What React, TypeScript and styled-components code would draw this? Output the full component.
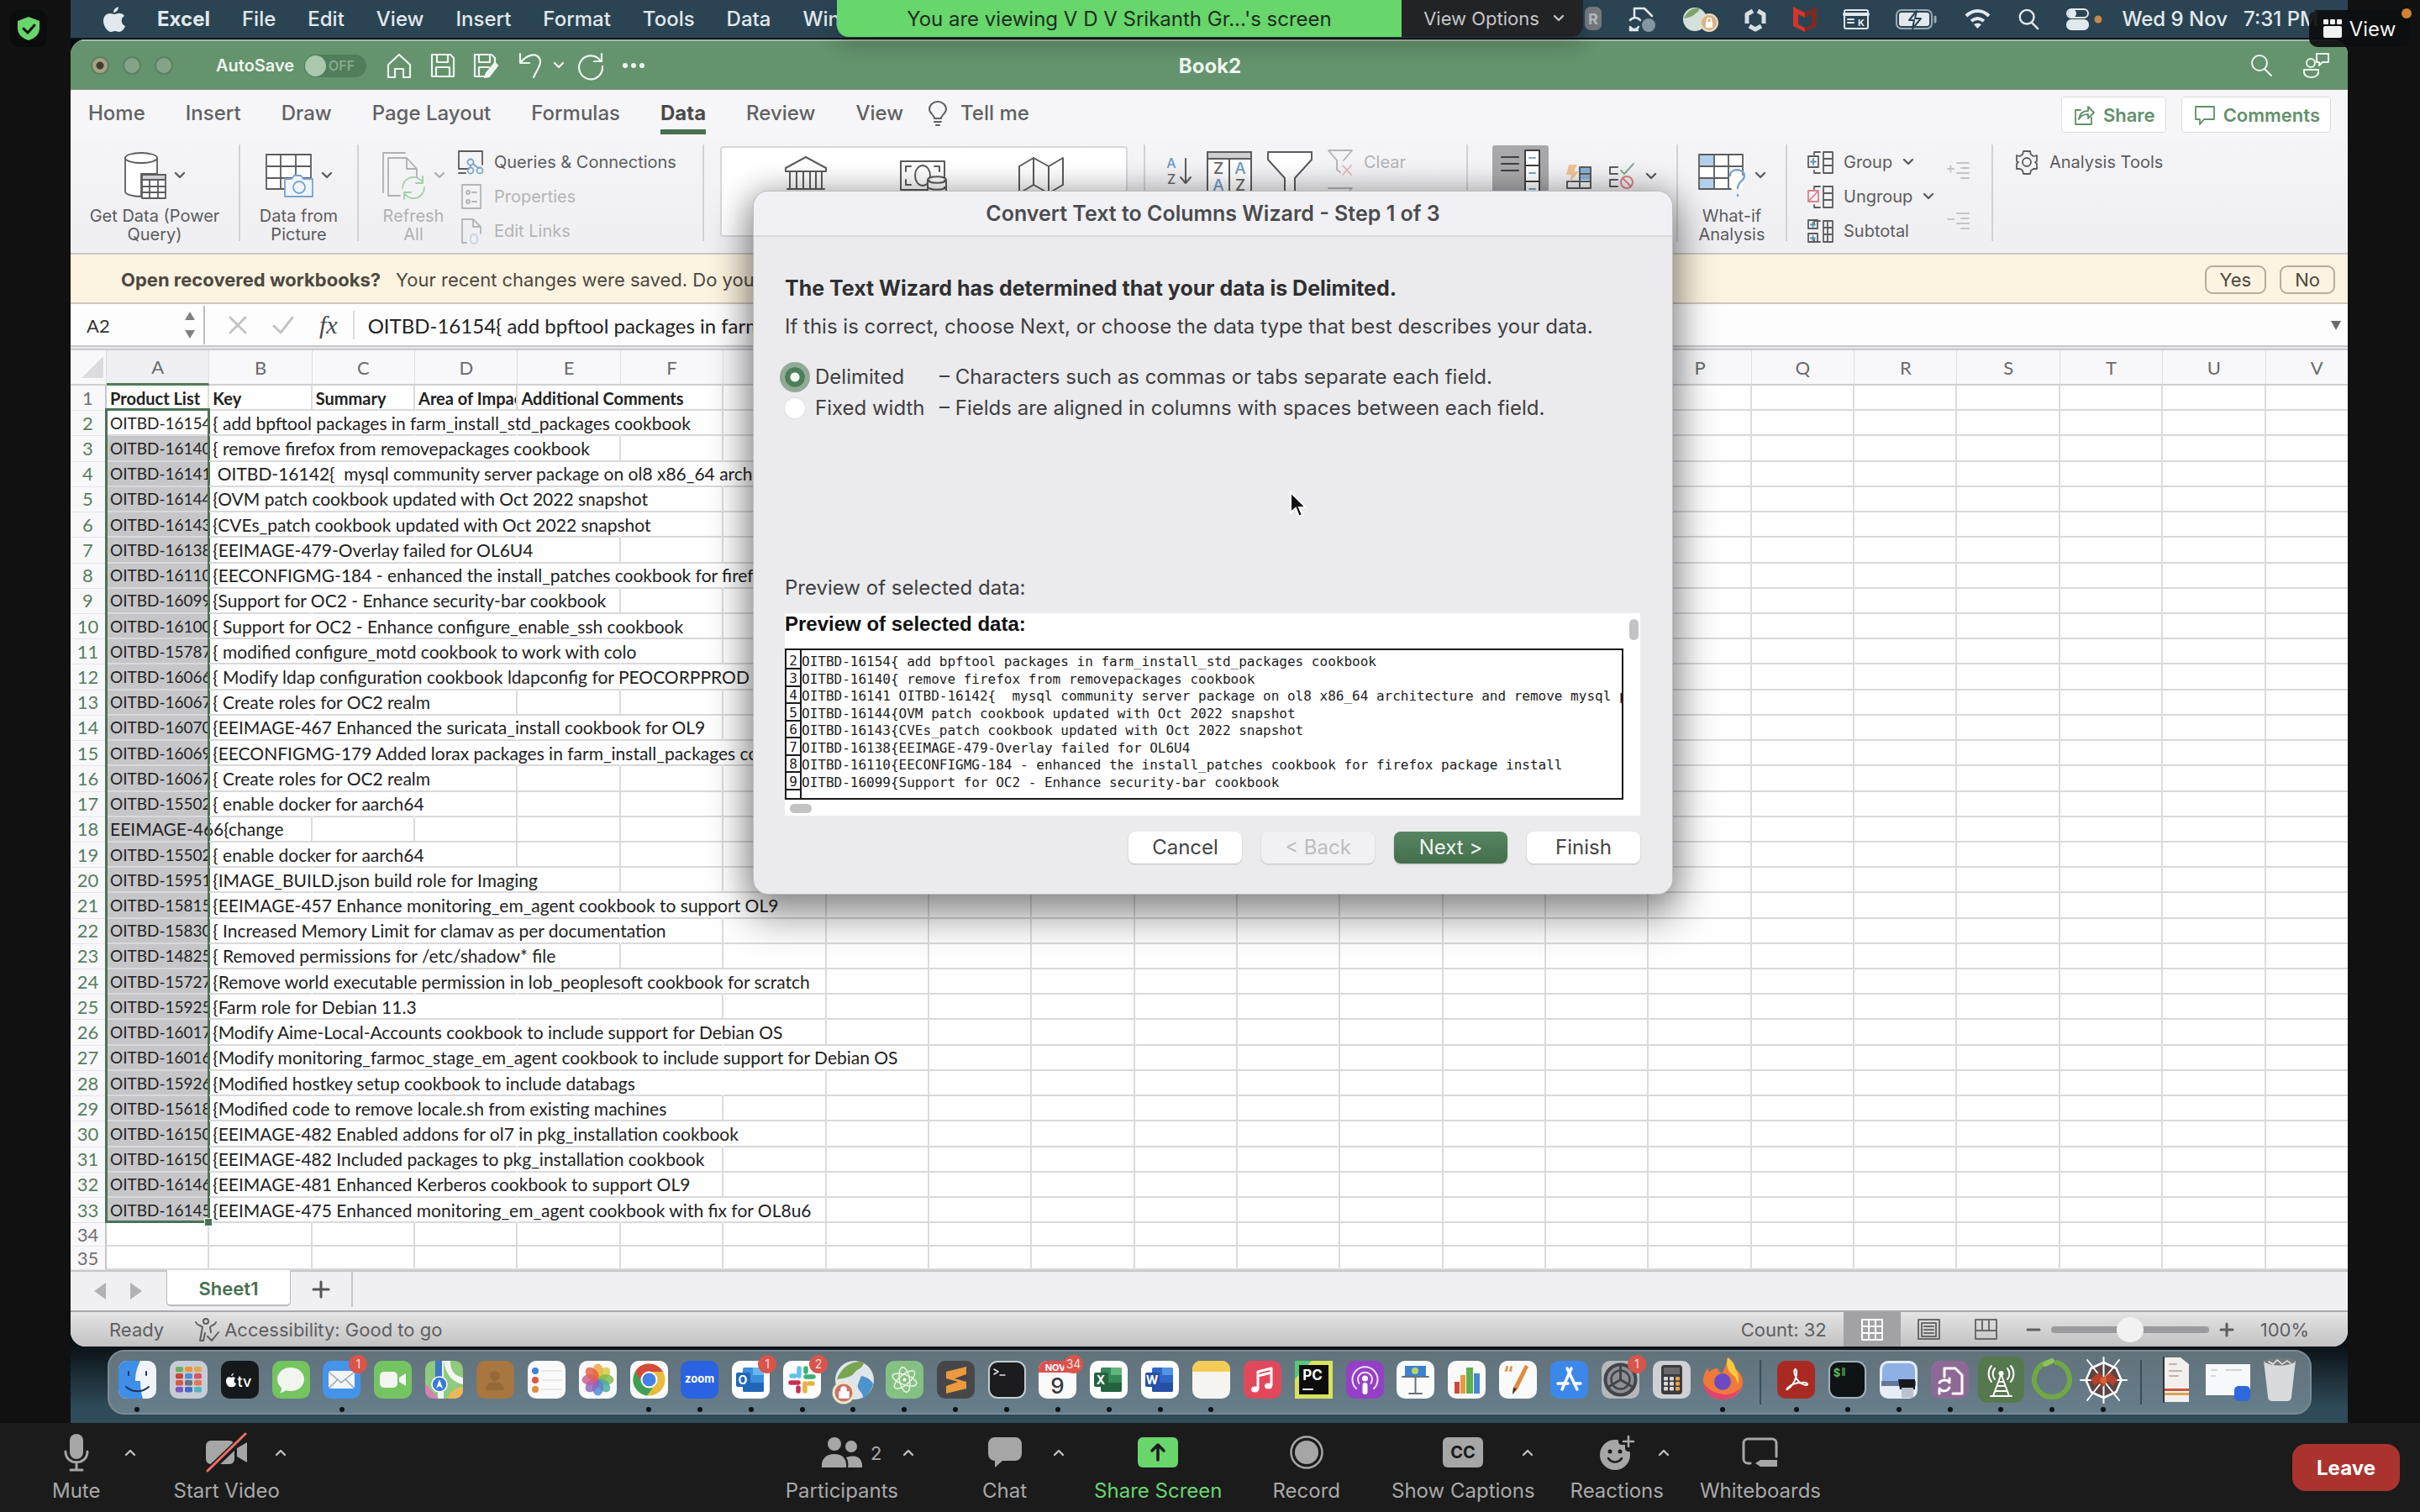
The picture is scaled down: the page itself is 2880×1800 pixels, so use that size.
import React from "react";
import styled, { createGlobalStyle } from "styled-components";

const ui = `Inter, "Liberation Sans", sans-serif`;
const cellFont = `Lato, "Liberation Sans", sans-serif`;
const mono = `"DejaVu Sans Mono", "Liberation Mono", monospace`;

const Global = createGlobalStyle`
  * { box-sizing: border-box; }
  body { margin: 0; background: #111; font-family: ${ui}; color: #444; overflow: hidden; }
  button, input { font: inherit; color: inherit; }
  button { background: none; border: 0; padding: 0; white-space: nowrap; }
  svg { display: block; flex: none; overflow: visible; }
`;

/* ---------- drawing helpers ---------- */
type GProps = { w: number; h: number; vb?: string; sw?: number; color?: string; children: React.ReactNode };
const G = ({ w, h, vb, sw = 2, color = "currentColor", children }: GProps) => (
  <svg width={w} height={h} viewBox={vb ?? `0 0 ${w} ${h}`} fill="none" stroke={color} strokeWidth={sw}
    strokeLinecap="round" strokeLinejoin="round" aria-hidden="true">{children}</svg>
);
const Chev = ({ up, w = 14 }: { up?: boolean; w?: number }) => (
  <G w={w} h={8} vb="0 0 14 8" sw={2.4}><path d={up ? "M2 7l5-5 5 5" : "M2 1l5 5 5-5"} /></G>
);

/* ---------- frame ---------- */
const Page = styled.div`display: flex; flex-direction: column; height: 100vh; position: relative;`;
const Stage = styled.div`
  flex: 1; min-height: 0; margin: 0 86px 0 84px; display: flex; flex-direction: column;
  background: linear-gradient(#050a0d 0 1580px, #0a1216 1603px, #2f4a58 1675px);
`;
const MenuBar = styled.header`
  height: 47px; flex: none; background: #2a4453; border-bottom: 2px solid #0d1418; display: flex;
  align-items: center; justify-content: space-between; padding: 0 35px 0 39px; color: #e2e9ee; font-size: 24px;
`;
const Menus = styled.nav`display: flex; align-items: center; gap: 38px;`;
const MenuItem = styled.button<{ $bold?: boolean }>`font-weight: ${p => (p.$bold ? 700 : 500)};`;
const Status = styled.div`display: flex; align-items: center; gap: 32px;`;
const Clock = styled.span`font-weight: 500; display: flex; gap: 19px; margin-left: -8px;`;

const Excel = styled.main`
  position: relative; flex: 1; min-height: 0; display: flex; flex-direction: column; background: #f4f4f6;
  border-radius: 18px; overflow: hidden;
`;
const TitleBar = styled.div`
  height: 60px; flex: none; background: #64936d; border-top: 2px solid #a0bba5; display: grid; grid-template-columns: 1fr auto 1fr;
  align-items: center; padding: 0 22px 0 24px; color: #eef5ef; box-shadow: inset 0 -1px #7c8f80;
`;
const Row = styled.div<{ $gap?: number; $end?: boolean }>`
  display: flex; align-items: center; gap: ${p => p.$gap ?? 0}px; justify-content: ${p => (p.$end ? "flex-end" : "flex-start")};
`;
const Light = styled.button<{ $dot?: boolean }>`
  width: 22px; height: 22px; border-radius: 50%; border: 2px solid #5c8063;
  background: ${p => (p.$dot ? "radial-gradient(#3c4030 0 4px, #a5a384 5px)" : "#82a589")};
`;
const AutoSave = styled.label`display: flex; align-items: center; gap: 12px; font-size: 20px; font-weight: 600; margin: 0 24px 0 51px;`;
const Toggle = styled.span`
  position: relative; width: 74px; height: 27px; border-radius: 14px; background: #527d5b; font-size: 16px; font-weight: 500; color: #8cb093;
  display: flex; align-items: center; justify-content: flex-end; padding-right: 14px;
  input { position: absolute; inset: 0; margin: 0; opacity: 0; }
  &::before { content: ""; position: absolute; left: 1px; top: 1px; width: 25px; height: 25px; border-radius: 50%; background: #a9c8ad; }
`;
const Tool = styled.button<{ $w: number; $after?: number }>`
  width: ${p => p.$w}px; height: 34px; display: grid; place-items: center; margin-right: ${p => p.$after ?? 22}px;
`;
const BookTitle = styled.h1`margin: 0; font-size: 24px; font-weight: 700;`;

/* ---------- ribbon ---------- */
const TabRow = styled.nav`
  height: 58px; flex: none; display: flex; justify-content: space-between; padding: 8px 20px 0 21px; background: #f6f6f8;
`;
const Tabs = styled.div`display: flex; gap: 48px; align-items: flex-start; padding-top: 6px;`;
const Tab = styled.button<{ $on?: boolean }>`
  display: flex; gap: 16px; align-items: center; font-size: 24px; line-height: 28px; padding-bottom: 5px; color: ${p => (p.$on ? "#4a4a4c" : "#616163")};
  font-weight: ${p => (p.$on ? 700 : 500)}; border-bottom: 6px solid ${p => (p.$on ? "#46704f" : "transparent")};
`;
const TellMe = styled(Tab)`margin-left: -18px;`;
const ChipRow = styled.div`display: flex; gap: 18px; align-self: flex-start;`;
const Chip = styled.button`
  height: 43px; padding: 0 12px 0 15px; display: flex; align-items: center; gap: 10px; background: #fff; border: 1px solid #dcdcde; border-radius: 4px;
  color: #63906c; font-size: 22px; font-weight: 600;
`;
const Ribbon = styled.section`
  height: 138px; flex: none; display: flex; padding: 7px 0 14px; background: linear-gradient(#f5f5f7, #efeff1); border-bottom: 2px solid #c9c9cb; font-size: 20px; color: #5c5c5e;
`;
const Group = styled.div<{ $w: number }>`
  flex: 0 0 ${p => p.$w}px; display: flex; border-right: 2px solid #d2d2d4; min-width: 0;
`;
const LastGroup = styled.div`flex: 1; display: flex; align-items: flex-start; padding-left: 27px;`;
const Big = styled.button<{ $w: number; $off?: boolean; $pad?: number }>`
  flex: none; width: ${p => p.$w}px; display: flex; flex-direction: column; align-items: center; padding: 8px 0 0 ${p => p.$pad ?? 0}px; gap: 8px; line-height: 22px;
  color: ${p => (p.$off ? "#b0b0b2" : "#5c5c5e")}; white-space: pre-line; height: 120px;
`;
const BigIcon = styled.span`display: flex; align-items: center; gap: 9px; height: 58px; flex: none;`;
const Stack = styled.div<{ $pad?: number }>`display: flex; flex-direction: column; padding-left: ${p => p.$pad ?? 0}px;`;
const Small = styled.button<{ $off?: boolean; $gap?: number }>`
  height: 41px; flex: none; display: flex; align-items: center; gap: ${p => p.$gap ?? 12}px; color: ${p => (p.$off ? "#b4b4b6" : "#5c5c5e")};
`;
const Gallery = styled.div`
  width: 485px; height: 108px; margin: 2px 0 0 19px; background: #fff; border: 2px solid #d8d8da; border-radius: 4px;
  display: flex; align-items: flex-start; justify-content: space-between; padding: 10px 74px 0 74px;
`;
const Pressed = styled.button`width: 67px; height: 100px; background: #a9a9ab; display: grid; justify-items: center; padding-top: 6px; align-items: start; border-radius: 3px;`;
const SortRow = styled.div`display: flex; align-items: flex-start; gap: 18px; height: 117px; padding: 8px 0 0 23px; > svg:first-child { margin-top: 7px; } ${Stack} { margin-top: -8px; }`;
const DataTools = styled.div`display: flex; gap: 20px; padding: 1px 0 0 29px; align-items: flex-start; > svg, > div { margin-top: 22px; }`;
const Indents = styled.div`display: flex; flex-direction: column; gap: 36px; margin: 19px 0 0 auto; padding-right: 27px; color: #c4c4c6;`;

const Message = styled.section`
  height: 59px; flex: none; background: #fcf3e0; border-bottom: 2px solid #cfc9bb; display: flex; align-items: center; justify-content: space-between;
  padding: 2px 15px 0 60px; font-size: 22px; color: #4c4840;
`;
const Strong = styled.strong`font-weight: 700; margin-right: 18px;`;
const MsgButton = styled.button`height: 34px; padding: 0 16px; border: 2px solid #b5ae9f; border-radius: 9px; font-size: 22px;`;

const Formula = styled.section`
  height: 55px; flex: none; display: flex; align-items: stretch; background: #fdfdfe; border-bottom: 2px solid #c9c9cb;
  box-shadow: inset 0 -2px #e8e8ea, inset 0 -4px #c9c9cb; padding: 2px 8px 5px 0;
`;
const NameBox = styled.label`
  width: 160px; display: flex; align-items: center; justify-content: space-between; padding: 0 10px 0 19px; border-right: 2px solid #bcbcbe; color: #808082;
  input { width: 90px; border: 0; padding: 0; background: none; font: 22px ${cellFont}; color: #333; outline: 0; }
`;
const FormulaTools = styled.div`display: flex; align-items: center; gap: 30px; padding: 0 18px 0 28px; color: #c4c4c6; margin: 6px 0; border-right: 2px solid #dcdcde;`;
const Fx = styled.button`font: italic 30px "Liberation Serif", serif; color: #4a4a4c;`;
const FormulaInput = styled.input`flex: 1; min-width: 0; border: 0; padding: 0 0 0 16px; background: none; font: 24px ${cellFont}; color: #222; outline: 0;`;

/* ---------- sheet ---------- */
const SheetArea = styled.div`flex: 1; min-height: 0; overflow: hidden; background: #fefefe;`;
const Sheet = styled.table`
  width: calc(100% + 25px); height: 100%; table-layout: fixed; border-collapse: separate; border-spacing: 0; font: 21px ${cellFont}; color: #222;
`;
const HeadCell = styled.th<{ $on?: boolean; $w?: number }>`
  width: ${p => (p.$w ? `${p.$w}px` : "auto")}; height: 42px; padding: 0; font-weight: 400; color: #6a6a6c; font-size: 22px;
  border-right: 1px solid #dededf; border-bottom: ${p => (p.$on ? "3px solid #4b7d57" : "2px solid #cfcfd1")}; background: ${p => (p.$on ? "#f0f0f2" : "#f8f8fa")};
  svg { margin-left: auto; margin-right: 3px; }
`;
const RowHead = styled.th<{ $on?: boolean }>`
  padding: 0; font-weight: 400; font-size: 22px; line-height: 22px; color: ${p => (p.$on ? "#567f61" : "#707072")}; background: #f8f8fa;
  border-right: 2px solid #c6c6c8; border-bottom: 1px solid #e6e6e8;
`;
const Cell = styled.td<{ $open?: boolean; $sel?: "first" | "mid" | "last"; $bold?: boolean; $clip?: boolean }>`
  position: relative; padding: 1px 0 0 4px; white-space: pre; line-height: 22px; font-weight: ${p => (p.$bold ? 700 : 400)};
  font-size: ${p => (p.$bold ? 20 : 21)}px; overflow: ${p => (p.$clip ? "hidden" : "visible")};
  border-bottom: 2px solid #d9d9db; border-right: 2px solid ${p => (p.$open ? "transparent" : "#dcdcde")};
  background: ${p => (p.$sel && p.$sel !== "first" ? "#c6c6c8" : "transparent")};
  &::after {
    content: ""; display: ${p => (p.$sel ? "block" : "none")}; position: absolute; left: -2px; right: -3px;
    top: ${p => (p.$sel === "first" ? "-3px" : "0")}; bottom: -2px; pointer-events: none;
    border: solid #4b7256; border-width: ${p => (p.$sel === "first" ? "3px 3px 0" : p.$sel === "last" ? "0 3px 3px" : "0 3px")};
  }
`;
const Clip = styled.span`display: block; overflow: hidden; font-size: 19px;`;
const FillHandle = styled.span`position: absolute; right: -6px; bottom: -6px; width: 10px; height: 10px; background: #4b7256; border: 1px solid #fff; z-index: 1;`;

const SheetTabs = styled.div`height: 50px; flex: none; display: flex; align-items: flex-start; background: #f0f0f2; border-top: 2px solid #c6c6c8; border-bottom: 2px solid #a9a9ab; padding-left: 28px;`;
const Arrows = styled.div`display: flex; gap: 29px; height: 46px; align-items: center; margin-right: 29px;`;
const SheetTab = styled.button`height: 43px; margin-top: -2px; padding-top: 2px; width: 148px; background: #fff; border: solid #b9b9bb; border-width: 0 1px 2px; border-radius: 0 0 5px 5px; color: #47704f; font-size: 22px; font-weight: 600;`;
const AddTab = styled.button`width: 74px; height: 42px; border-right: 2px solid #c6c6c8; display: grid; place-items: center; color: #555;`;
const StatusBar = styled.footer`
  height: 41px; flex: none; background: linear-gradient(#e4e4e5, #c2c2c3); display: flex; justify-content: space-between; align-items: center;
  padding: 0 46px; font-size: 22px; color: #5e5e60;
`;
const CountText = styled.span`margin-right: 20px;`;
const ViewButton = styled.button<{ $on?: boolean }>`width: 68px; height: 41px; display: grid; place-items: center; background: ${p => (p.$on ? "#a2a2a4" : "none")}; color: ${p => (p.$on ? "#fff" : "#6a6a6c")};`;
const ZoomButton = styled.button`width: 16px; display: grid; place-items: center;`;
const ZoomSet = styled.div`display: flex; align-items: center; padding-left: 14px;`;
const Zoom = styled.input`
  appearance: none; width: 188px; height: 8px; margin: 0 13px; border-radius: 4px; background: #9c9c9e;
  &::-webkit-slider-thumb { appearance: none; width: 32px; height: 30px; border-radius: 50%; background: #f2f2f3; }
`;
const Percent = styled.span`margin-left: 32px;`;

/* ---------- dialog ---------- */
const Dialog = styled.section`
  position: absolute; top: 180px; left: calc(50% - 543px); width: 1095px; background: #ebebed; border-radius: 18px; border: 1px solid #bcbcbf;
  box-shadow: 0 20px 46px 8px rgba(0, 0, 0, .38), 0 0 34px rgba(0, 0, 0, .2); color: #3f3f42; font-size: 24px;
`;
const DialogTitle = styled.h2`margin: 0; height: 54px; display: grid; place-items: center; background: #f1f1f5; border-bottom: 2px solid #d9d9dc; border-radius: 18px 18px 0 0; font-size: 25px; font-weight: 600; color: #4b4b4e;`;
const DialogBody = styled.form`padding: 48px 38px 36px 37px; line-height: 26px; display: flex; flex-direction: column;`;
const Lead = styled.p`margin: 0 0 20px; font-size: 25px; font-weight: 700; color: #2f2f32;`;
const Para = styled.p`margin: 0 0 28px;`;
const Choice = styled.label`display: grid; grid-template-columns: 36px 148px 1fr; height: 37px; align-items: center;`;
const Radio = styled.input`
  appearance: none; margin: 0; width: 24px; height: 24px; border-radius: 50%; background: #fff; box-shadow: 0 0 2px rgba(0, 0, 0, .15);
  &:checked { background: radial-gradient(#f4fff6 0 5px, #4d7d59 6px); box-shadow: 0 0 0 6px #93a997; }
`;
const PreviewLabel = styled.p`margin: 183px 0 17px;`;
const Preview = styled.div`background: #fff; height: 241px; display: grid; grid-template-columns: 1fr 20px; grid-template-rows: 42px 180px 1fr; margin: 0 0 19px;`;
const PreviewTitle = styled.h3`margin: 0; font: 700 24px/26px "Liberation Sans", sans-serif; color: #111;`;
const Lines = styled.div`border: 2px solid #1a1a1a; overflow: hidden; height: 180px;`;
const LineTable = styled.table`height: 176px; border-collapse: separate; border-spacing: 0; table-layout: fixed; width: 100%; font: 16px/18px ${mono}; color: #1c1c1c;`;
const LineNo = styled.th`width: 18px; padding: 0; border: solid #1a1a1a; border-width: 0 2px 2px 0; font-weight: 400; vertical-align: bottom; text-align: center; line-height: 16px;`;
const LineRow = styled.tr<{ $h?: number }>`height: ${p => (p.$h ? `${p.$h}px` : "auto")}; &:last-child th { border-bottom: 0; }`;
const LineText = styled.td`padding: 0; white-space: pre; vertical-align: bottom;`;
const VThumb = styled.span`grid-row: 1 / 3; grid-column: 2; justify-self: end; width: 11px; height: 25px; border-radius: 6px; background: #c3c3c5; margin: 7px 2px 0 0;`;
const HThumb = styled.span`grid-row: 3; width: 26px; height: 11px; border-radius: 6px; background: #c3c3c5; margin: 5px 0 0 6px;`;
const Actions = styled.div`display: flex; justify-content: flex-end; gap: 23px;`;
const Action = styled.button<{ $kind?: "primary" | "off" }>`
  width: 135px; height: 38px; border-radius: 8px; font-size: 24px; box-shadow: 0 1px 2px rgba(0, 0, 0, .2);
  background: ${p => (p.$kind === "primary" ? "linear-gradient(#578463, #456f4c)" : p.$kind === "off" ? "#f1f1f4" : "#fff")};
  color: ${p => (p.$kind === "primary" ? "#eef6ef" : p.$kind === "off" ? "#bdbdc0" : "#444447")};
`;
const Cursor = styled.div`position: absolute; top: 357px; left: 638px;`;

/* ---------- dock ---------- */
const DockArea = styled.div`height: 91px; flex: none; padding: 4px 43px 10px 44px;`;
const Dock = styled.nav`
  height: 77px; border-radius: 20px; background: linear-gradient(#62727b, #667e8b); border: 2px solid #7b8b94; display: flex; padding: 0 6px 0 3px;
`;
const DockItem = styled.button`position: relative; flex: 1; display: flex; flex-direction: column; align-items: center; padding-top: 11px; gap: 10px;`;
const Running = styled.i`width: 6px; height: 6px; border-radius: 50%; background: #0d1418;`;
const Badge = styled.span`
  position: absolute; top: 4px; right: 0; min-width: 22px; height: 22px; padding: 0 3px; border-radius: 11px; background: #d9544b; color: #f6dcd9; font-size: 14px; line-height: 22px;
`;
const Divider = styled.i`width: 2px; margin: 10px 12px 10px 13px; background: #3d4c55;`;

/* ---------- meeting controls ---------- */
const Controls = styled.footer`height: 106px; flex: none; background: #1b1b1b; display: flex; padding: 13px 24px 0 62px; color: #a9a9a9; font-size: 24px;`;
const ControlGroup = styled.div<{ $mid?: boolean }>`display: flex; align-items: flex-start; ${p => (p.$mid ? "margin: 0 auto; padding-left: 30px;" : "")}`;
const Control = styled.button<{ $before?: number; $green?: boolean }>`
  position: relative; display: flex; flex-direction: column; align-items: center; gap: 10px; line-height: 28px; margin-left: ${p => p.$before ?? 0}px;
  color: ${p => (p.$green ? "#69d66c" : "#a9a9a9")};
`;
const ControlIcon = styled.span`height: 44px; display: grid; place-items: center; color: #a6a6a6;`;
const Caret = styled.button<{ $before: number }>`width: 20px; height: 44px; display: grid; place-items: center; margin-left: ${p => p.$before}px; color: #c0c0c0; position: relative;`;
const Count = styled.span`position: absolute; left: calc(50% + 34px); top: 9px; color: #a9a9a9; font-size: 22px;`;
const Leave = styled.button`width: 128px; height: 56px; margin-top: 12px; border-radius: 16px; background: #aa332e; color: #fff; font-weight: 700; font-size: 24px;`;

const ShareBanner = styled.div`
  position: absolute; top: 0; left: 996px; display: flex; height: 44px; border-radius: 0 0 14px 14px; overflow: hidden; font-size: 24px;
  box-shadow: 0 10px 24px rgba(0, 0, 0, .2);
`;
const Viewing = styled.p`margin: 0; width: 672px; display: grid; place-items: center; background: #67d66b; color: #1d2d1e;`;
const ViewOptions = styled.button`width: 216px; background: #222325; color: #c6c6c8; display: flex; align-items: center; justify-content: center; gap: 16px; font-size: 22px; padding-left: 4px;`;
const ViewPill = styled.button`
  position: absolute; top: 12px; right: 12px; width: 120px; height: 44px; border-radius: 10px; background: rgba(12, 14, 15, .92); color: #f2f2f2; font-size: 24px;
  display: flex; align-items: center; justify-content: center; gap: 9px;
`;
const RecordDot = styled.i`position: absolute; top: 10px; right: 10px; width: 12px; height: 12px; border-radius: 50%; background: #d1832f;`;
const Shield = styled.div`position: absolute; top: 12px; left: 12px; width: 44px; height: 44px; border-radius: 10px; background: #0a0d0b; display: grid; place-items: center;`;

/* ---------- data: key, summary, and how many columns the text runs across ---------- */
type Line = [string, string, number];
const rows: Line[] = [
  ["OITBD-16154", "{ add bpftool packages in farm_install_std_packages cookbook", 5],
  ["OITBD-16140", "{ remove firefox from removepackages cookbook", 4],
  ["OITBD-16141", " OITBD-16142{  mysql community server package on ol8 x86_64 architecture", 7],
  ["OITBD-16144", "{OVM patch cookbook updated with Oct 2022 snapshot", 5],
  ["OITBD-16143", "{CVEs_patch cookbook updated with Oct 2022 snapshot", 5],
  ["OITBD-16138", "{EEIMAGE-479-Overlay failed for OL6U4", 4],
  ["OITBD-16110", "{EECONFIGMG-184 - enhanced the install_patches cookbook for firefox package install", 8],
  ["OITBD-16099", "{Support for OC2 - Enhance security-bar cookbook", 4],
  ["OITBD-16100", "{ Support for OC2 - Enhance configure_enable_ssh cookbook", 5],
  ["OITBD-15787", "{ modified configure_motd cookbook to work with colo", 5],
  ["OITBD-16066", "{ Modify ldap configuration cookbook ldapconfig for PEOCORPPROD to", 7],
  ["OITBD-16067", "{ Create roles for OC2 realm", 3],
  ["OITBD-16070", "{EEIMAGE-467 Enhanced the suricata_install cookbook for OL9", 5],
  ["OITBD-16069", "{EECONFIGMG-179 Added lorax packages in farm_install_packages cookbook", 7],
  ["OITBD-16067", "{ Create roles for OC2 realm", 3],
  ["OITBD-15502", "{ enable docker for aarch64", 3],
  ["EEIMAGE-466{change", "", 1],
  ["OITBD-15502", "{ enable docker for aarch64", 3],
  ["OITBD-15951", "{IMAGE_BUILD.json build role for Imaging", 4],
  ["OITBD-15815", "{EEIMAGE-457 Enhance monitoring_em_agent cookbook to support OL9", 6],
  ["OITBD-15830", "{ Increased Memory Limit for clamav as per documentation", 5],
  ["OITBD-14825", "{ Removed permissions for /etc/shadow* file", 4],
  ["OITBD-15727", "{Remove world executable permission in lob_peoplesoft cookbook for scratch", 6],
  ["OITBD-15925", "{Farm role for Debian 11.3", 5],
  ["OITBD-16017", "{Modify Aime-Local-Accounts cookbook to include support for Debian OS", 6],
  ["OITBD-16016", "{Modify monitoring_farmoc_stage_em_agent cookbook to include support for Debian OS", 7],
  ["OITBD-15926", "{Modified hostkey setup cookbook to include databags", 6],
  ["OITBD-15618", "{Modified code to remove locale.sh from existing machines", 5],
  ["OITBD-16150", "{EEIMAGE-482 Enabled addons for ol7 in pkg_installation cookbook", 6],
  ["OITBD-16150", "{EEIMAGE-482 Included packages to pkg_installation cookbook", 5],
  ["OITBD-16146", "{EEIMAGE-481 Enhanced Kerberos cookbook to support OL9", 5],
  ["OITBD-16145", "{EEIMAGE-475 Enhanced monitoring_em_agent cookbook with fix for OL8u6", 6],
];
const letters = "ABCDEFGHIJKLMNOPQRSTUV".split("");
const titles = ["Product List", "Key", "Summary", "Area of Impact", "Additional Comments"];
const preview = rows.slice(0, 8).map(([key, text]) => key + text + (text.endsWith("architecture") ? " and remove mysql pac" : ""));

/* ---------- dock artwork, 45 x 45 ---------- */
const Tile = ({ fill }: { fill: string }) => <rect width="45" height="45" rx="10" fill={fill} stroke="none" />;
const T = (p: { x: number; y: number; s: number; c: string; b?: boolean; children: string }) => (
  <text x={p.x} y={p.y} fontSize={p.s} fill={p.c} stroke="none" fontWeight={p.b ? 700 : 500} textAnchor="middle" fontFamily="Inter, sans-serif">{p.children}</text>
);
const N = { stroke: "none" };
const Office = ({ c, l }: { c: string[]; l: string }) => (
  <><Tile fill="#fff" /><g {...N}><rect x="13" y="8" width="25" height="29" rx="2" fill={c[1]} /><path d="M25 8h11a2 2 0 012 2v7H25z" fill={c[2]} /><path d="M13 26h25v9a2 2 0 01-2 2H15a2 2 0 01-2-2z" fill={c[0]} /><rect x="5" y="14" width="17" height="17" rx="2" fill={c[0]} /></g><T x={13} y={28} s={14} c="#fff" b>{l}</T></>
);
const Globe = () => (
  <><circle cx="24" cy="23" r="23" fill="#dfe6ea" {...N} /><path d="M3 22C8 8 20 0 33 1c4 2 0 6-4 9-5 2-6 8-12 9-5 2-9 2-14 3z" fill="#79a552" {...N} /><path d="M32 18c6 1 13 5 14 10-2 7-6 13-12 17 1-8-8-10-6-17z" fill="#4d94cc" {...N} /><circle cx="11" cy="38" r="12" fill="#c8746a" stroke="#efe6c8" strokeWidth="3" /><path d="M6 37h11v7H6zM8 37v-3a3 3 0 016 0v3" fill="#fff" stroke="#fff" strokeWidth="1.5" /></>
);
const art: Record<string, React.ReactNode> = {
  Finder: <><Tile fill="#f0f3f8" /><path d="M10 0h16c-4 8-6 15-6 24h6c0 8 1 15 3 21H10A10 10 0 010 35V10A10 10 0 0110 0z" fill="#3f8ee8" {...N} /><path d="M12 13v4M33 13v4M9 31c8 7 19 7 27 0" stroke="#1c3560" strokeWidth="2" /></>,
  Launchpad: <><Tile fill="#c7ccd6" />{["#69b35a", "#e8953f", "#e6a94a", "#c8453d", "#4a8fd8", "#d85668", "#d95545", "#67727d", "#e07a4e", "#7a59c0", "#4668c8", "#54b2c0"].map((c, i) => <rect key={i} x={7 + (i % 3) * 11} y={7 + Math.floor(i / 3) * 8} width="9" height="6.5" rx="2" fill={c} {...N} />)}</>,
  TV: <><Tile fill="#15191b" /><path d="M12 18c1-3 3-3 3-4 0 2-1 4-3 4zM6 24c0-4 3-6 6-4 3-2 5 0 5 1-2 1-2 5 1 6-1 4-4 5-6 4-3 1-6-3-6-7z" fill="#fff" {...N} /><T x={28} y={31} s={18} c="#fff">tv</T></>,
  Messages: <><Tile fill="#74c561" /><path d="M22 8c9 0 16 6 16 14s-7 14-16 14c-2 0-4 0-6-1-2 2-4 3-7 3 2-2 2-4 2-6-3-2-5-6-5-10C6 14 13 8 22 8z" fill="#f1f5ef" {...N} /></>,
  Mail: <><Tile fill="#4594ea" /><rect x="7" y="12" width="31" height="21" rx="3" fill="#f3f5f7" {...N} /><path d="M8 14l14 12 15-12M8 32l10-10M37 32L27 22" stroke="#9aa5b2" strokeWidth="1.5" /></>,
  FaceTime: <><Tile fill="#74c561" /><rect x="7" y="13" width="21" height="19" rx="5" fill="#f1f5ef" {...N} /><path d="M30 20l8-5v15l-8-5z" fill="#f1f5ef" {...N} /></>,
  Maps: <><Tile fill="#8fcb7c" /><path d="M15 0h7v45h-7z" fill="#f2f4f2" {...N} /><path d="M12 0h8v24h-8z" fill="#3c77c9" {...N} /><path d="M30 0c0 12 5 18 15 20v8C33 26 24 16 22 0z" fill="#f2f4f2" {...N} /><path d="M0 27l16 18h-6A10 10 0 010 35z" fill="#d77fb5" {...N} /><path d="M27 45c2-8 8-13 18-14v4a10 10 0 01-10 10z" fill="#ecb95a" {...N} /><circle cx="17" cy="28" r="9" fill="#3b79d8" stroke="#fff" strokeWidth="1.5" /><path d="M17 22l4 11-4-3-4 3z" fill="#fff" {...N} /></>,
  Contacts: <><Tile fill="#a8763f" /><circle cx="22" cy="18" r="6" fill="#966a38" {...N} /><path d="M11 35c0-7 5-10 11-10s11 3 11 10z" fill="#966a38" {...N} /></>,
  Reminders: <><Tile fill="#fafafa" />{["#3f82e0", "#d9583f", "#e38b3c"].map((c, i) => <g key={c}><circle cx="9" cy={12 + i * 11} r="4" fill={c} {...N} /><path d={`M17 ${12 + i * 11}h23`} stroke="#e4e4e4" strokeWidth="1.5" /></g>)}</>,
  Photos: <><Tile fill="#fafafa" />{["#f0a13c", "#d7c840", "#7fba4a", "#4ca8a0", "#5484cf", "#8a63bd", "#c95a95", "#e2604a"].map((c, i) => <ellipse key={c} cx="22.5" cy="13" rx="6.5" ry="9.5" fill={c} opacity="0.82" transform={`rotate(${i * 45} 22.5 22.5)`} {...N} />)}</>,
  Chrome: <><Tile fill="#fafafa" /><circle cx="22.5" cy="22.5" r="19" fill="#e8bb3e" {...N} /><path d="M6 13a19 19 0 0133 0H22.5L14 27z" fill="#d64a3a" {...N} /><path d="M6 13L15 27l7 5 5 0-7 9.5A19 19 0 016 13z" fill="#3f9f55" {...N} /><circle cx="22.5" cy="22.5" r="9" fill="#4380e8" stroke="#fff" strokeWidth="2" /></>,
  Zoom: <><Tile fill="#2a63e2" /><T x={22.5} y={26} s={13} c="#fff" b>zoom</T></>,
  Outlook: <Office c={["#2167b8", "#3a8edb", "#67b6ee"]} l="O" />,
  Slack: <><Tile fill="#fff" /><g strokeWidth="5.5"><path d="M19 9v9M10 18h4" stroke="#5fc3e8" /><path d="M36 19h-9M27 9v4" stroke="#3fae79" /><path d="M26 36v-9M35 27h-4" stroke="#e6b23e" /><path d="M9 26h9M18 36v-4" stroke="#c92f5c" /></g></>,
  Globe: <Globe />,
  Atom: <><Tile fill="#86c184" /><g stroke="#e8f3e4" strokeWidth="1.5">{[0, 60, 120].map(a => <ellipse key={a} cx="22.5" cy="22.5" rx="15" ry="6" transform={`rotate(${a + 20} 22.5 22.5)`} />)}</g><circle cx="22.5" cy="22.5" r="2" fill="#fff" {...N} /></>,
  Sublime: <><Tile fill="#47474a" /><path d="M35 7v9l-14 5 14 4v8l-24 6v-9l14-5-14-4v-8z" fill="#eb9a3d" {...N} /></>,
  Terminal: <><rect x="1" y="1" width="43" height="43" rx="10" fill="#1c1c1e" stroke="#c3ccd2" strokeWidth="2" /><path d="M7 10l5 3-5 3M14 17h6" stroke="#e6e6e6" strokeWidth="1.5" /></>,
  Calendar: <><Tile fill="#fafafa" /><path d="M0 14v-4A10 10 0 0110 0h25a10 10 0 0110 10v4z" fill="#dd4f50" {...N} /><T x={20} y={12} s={11} c="#fff" b>NOV</T><T x={22.5} y={39} s={26} c="#39393b">9</T></>,
  Excel: <Office c={["#24623f", "#35885a", "#63b37c"]} l="X" />,
  Word: <Office c={["#2450a6", "#2f66c8", "#4f95e2"]} l="W" />,
  Notes: <><Tile fill="#f6f4f1" /><path d="M0 13v-3A10 10 0 0110 0h25a10 10 0 0110 10v3z" fill="#f4cb55" {...N} /></>,
  Music: <><Tile fill="#e2485c" /><path d="M17 33V13l16-4v20M17 18l16-4" stroke="#fff" strokeWidth="3" /><ellipse cx="13.5" cy="34" rx="4.5" ry="3.5" fill="#fff" {...N} /><ellipse cx="29.5" cy="30" rx="4.5" ry="3.5" fill="#fff" {...N} /></>,
  PyCharm: <><rect width="45" height="45" fill="#d9e35a" {...N} /><path d="M0 0h20L0 22z" fill="#57c878" {...N} /><rect x="5" y="5" width="35" height="35" fill="#0c0c0c" {...N} /><T x={21} y={23} s={17} c="#fff" b>PC</T><path d="M10 34h11" stroke="#fff" /></>,
  Podcasts: <><Tile fill="#9440c6" /><g stroke="#f1e2fa" strokeWidth="2"><path d="M12 33a15 15 0 1121 0M15.5 27a8.5 8.5 0 1114 0" /></g><circle cx="22.5" cy="21" r="3.5" fill="#fff" {...N} /><rect x="19.5" y="26" width="6" height="14" rx="3" fill="#fff" {...N} /></>,
  Keynote: <><Tile fill="#fafafa" /><rect x="10" y="6" width="25" height="13" fill="#3c82d0" {...N} /><circle cx="22" cy="12" r="4" fill="#bcd55c" {...N} /><path d="M22.5 20v18M15 39h15M7 19h31" stroke="#66727c" strokeWidth="2" /></>,
  Numbers: <><Tile fill="#fafafa" /><g {...N}><rect x="8" y="25" width="6" height="14" fill="#c9493f" /><rect x="15" y="17" width="6" height="22" fill="#e59a3c" /><rect x="22" y="8" width="8" height="31" fill="#5faf4f" /><rect x="31" y="15" width="7" height="24" fill="#4687d4" /></g></>,
  Pages: <><Tile fill="#fafafa" /><path d="M31 5l4 2-13 27-6 6 1-8z" fill="#e08b3d" {...N} /><path d="M21 33l-5 7 1-8z" fill="#333" {...N} /><T x={11} y={22} s={22} c="#e3924a" b>“</T></>,
  "App Store": <><Tile fill="#3b88ea" /><path d="M25 9L14 34M20 9l12 25M9 27h12M28 27h8" stroke="#fff" strokeWidth="3.5" /></>,
  Settings: <><Tile fill="#b5b8bb" /><circle cx="22.5" cy="22.5" r="18" stroke="#414448" strokeWidth="4" fill="#8c9094" /><circle cx="22.5" cy="22.5" r="11" stroke="#414448" strokeWidth="2.5" /><path d="M22.5 22.5V5M22.5 22.5l15 9M22.5 22.5l-15 9" stroke="#414448" strokeWidth="3" /></>,
  Calculator: <><Tile fill="#cfcfd6" /><rect x="10" y="5" width="25" height="35" rx="4" fill="#3a3a3d" {...N} /><rect x="13" y="8" width="19" height="8" fill="#6a6a6e" {...N} />{[0, 1, 2].map(r => [0, 1, 2].map(c => <rect key={`${r}${c}`} x={13 + c * 7} y={19 + r * 6} width="5" height="4.5" rx="1" fill={c === 2 ? "#eaa04b" : "#d7d7d7"} {...N} />))}</>,
  Firefox: <><path d="M22 46C8 46-1 36-1 24c0-7 3-12 5-15 1 2 1 3 3 4C9 10 13 9 16 9c1 3 3 5 5 6C24 11 26 6 28-4c7 5 9 10 9 13 6 5 10 11 9 19-2 11-12 18-24 18z" fill="#ef7a38" {...N} /><path d="M-1 26c1 12 11 20 23 20 11 0 20-7 23-16-6 8-14 11-22 10C12 39 4 34-1 26z" fill="#e5416f" {...N} /><circle cx="22" cy="25" r="10" fill="#6b4bc4" {...N} /><path d="M28-4c7 5 9 10 9 13 4 6 5 12 3 19-1-7-4-10-8-13-4-4-6-9-4-19z" fill="#f7c93f" {...N} /></>,
  Acrobat: <><Tile fill="#a92a22" /><path d="M12 34c6-3 12-14 11-22-1-4-4-1-2 4 2 7 7 12 13 13 4 0 2-4-4-3-7 0-13 2-16 5-3 2-3 4-2 3z" stroke="#fff" strokeWidth="2" /></>,
  iTerm: <><rect x="1" y="1" width="43" height="43" rx="10" fill="#101315" stroke="#9fb0bb" strokeWidth="2" /><T x={10} y={19} s={13} c="#58b65a" b>$</T><rect x="16" y="8" width="4" height="10" fill="#3d7a40" {...N} /></>,
  Preview: <><Tile fill="#e6edf6" /><path d="M3 24V10a7 7 0 017-7h25a7 7 0 017 7v14z" fill="#8fb0e4" {...N} /><path d="M2 24h41v6H2z" fill="#63769a" {...N} /><path d="M22 22h20v12H24z" fill="#17191c" {...N} /><path d="M26 32h14v12H26z" fill="#b9c2cf" {...N} /></>,
  Sync: <><Tile fill="#8d6a96" /><path d="M16 19V9h13l8 8v22H26" stroke="#fff" strokeWidth="3" /><path d="M10 26c3-4 10-4 12 0v-5M22 32c-3 5-9 5-12 1v6" stroke="#fff" strokeWidth="3" /></>,
  Antenna: <><rect x="-5" y="-5" width="55" height="55" rx="11" fill="#56784f" {...N} /><path d="M22.5 16L13 42M22.5 16L32 42M10 42h25M18 30h9M16 36h13M20 25h5M15 22a10 10 0 010-13M30 22a10 10 0 000-13M11 25a15 15 0 010-19M34 25a15 15 0 000-19" stroke="#fff" strokeWidth="2" /><circle cx="22.5" cy="15" r="3" fill="#fff" {...N} /></>,
  Ring: <><path d="M28 2a21 21 0 11-12 0" stroke="#70a845" strokeWidth="6" /><path d="M14 4l8-4" stroke="#8cc455" strokeWidth="6" /></>,
  Spider: <><path d="M22.5 2l15 7 6 14-6 14-15 7-15-7-6-14 6-14z" fill="#5a4444" stroke="#fff" strokeWidth="2.5" /><path d="M22.5-4v54M3-1l38 48M41-1L3 47M-5 23h55" stroke="#fff" strokeWidth="2" /><path d="M7 22l9-8 7 6 7-6 9 8-5 8-7-6-5 7-6-5-4 4z" fill="#b5402c" {...N} /><circle cx="22.5" cy="23" r="4" fill="#d8632e" {...N} /></>,
  Document: <><path d="M7-4h20l10 8v45H7z" fill="#f2efec" {...N} /><path d="M7 33h30v3H7z" fill="#d0543c" {...N} /><path d="M7 38h30v3H7z" fill="#d9a25a" {...N} /><path d="M14 4h8M14 12h14M14 18h10" stroke="#b8b4b0" strokeWidth="2" /><path d="M7-4v53" stroke="#333" strokeWidth="2" /></>,
  Download: <><rect x="-4" y="4" width="53" height="37" fill="#f7f8fb" {...N} /><path d="M3 11h6M20 11h18M3 18h4" stroke="#d2d4d8" strokeWidth="2" /><rect x="30" y="30" width="19" height="18" rx="5" fill="#2f68dc" {...N} /></>,
  Trash: <><path d="M4 0h38l-5 43c0 4-3 5-6 5H15c-3 0-6-1-6-5z" fill="#d8dadc" {...N} /><path d="M4 1c3-5 8-4 11-3 4-3 9-2 12 0 5-3 11-1 15 3-8 6-29 6-38 0z" fill="#75797c" {...N} /><path d="M10 1l5 3 5-5 6 5 6-4 4 3" stroke="#eee" strokeWidth="1.5" /></>,
};
type DockEntry = { name: string; run: boolean; badge?: string };
const running = new Set(["Finder", "Mail", "Chrome", "Zoom", "Outlook", "Slack", "Globe", "Atom", "Sublime", "Terminal", "Calendar", "Excel", "Word", "Notes", "Firefox", "Acrobat", "iTerm", "Preview", "Sync", "Antenna", "Ring", "Spider"]);
const badges: Record<string, string> = { Mail: "1", Outlook: "1", Slack: "2", Calendar: "34", Settings: "1" };
const dock: DockEntry[] = Object.keys(art).map(name => ({ name, run: running.has(name), badge: badges[name] }));

/* ---------- glyphs ---------- */
const Magnifier = ({ s = 28, sw = 2 }: { s?: number; sw?: number }) => <G w={s} h={s} vb="0 0 28 28" sw={sw}><circle cx="12" cy="11" r="9" /><path d="M18 18l8 8" /></G>;
const GridGlyph = () => <G w={28} h={26}><path d="M2 1h24v24H2zM2 9h24M2 17h24M10 1v24M18 1v24" /></G>;
const Outline = ({ plus }: { plus?: boolean }) => <G w={26} h={24}><path d={`M12 3h14M17 9h9M12 15h14M17 21h9M1 10h7${plus ? "M4.5 6.5v7" : ""}`} /></G>;
const GroupGlyph = ({ kind }: { kind: "g" | "u" | "s" }) => (
  <G w={31} h={28} sw={1.8}>
    <path d="M19 2h11v25H19zM19 10h11M19 18h11M8 5V2h7M8 24v3h7" />
    {kind === "u" && <path d="M1 7h12v13H1zM1 20L13 7" stroke="#d9828a" />}
    {kind === "g" && <><path d="M1 7h12v13H1z" /><path d="M7 10v7M4 13.5h6" stroke="#5a8fa8" /></>}
    {kind === "s" && <><path d="M1 1h11v10H1zM1 17h11v10H1zM24 2v25" /><path d="M6.5 4v5M4 6.5h5M6.5 20v5M4 22.5h5" stroke="#5a8fa8" /></>}
  </G>
);

const RibbonBar = () => (
  <Ribbon>
    <Group $w={202}>
      <Big $w={200}>
        <BigIcon><G w={50} h={56} sw={1.8}><path d="M1 7v40c0 3 8 6 19 6V26h19V7c0 3-8 6-19 6S1 10 1 7z" fill="#fff" /><ellipse cx="20" cy="7" rx="19" ry="6" fill="#fff" /><path d="M21 27h28v28H21z" fill="#fff" /><path d="M21 27h28v6H21z" fill="#d0d0d2" /><path d="M21 41h28M21 48h28M30 33v22M40 33v22" /></G><Chev /></BigIcon>
        {"Get Data (Power\nQuery)"}
      </Big>
    </Group>
    <Group $w={141}>
      <Big $w={139}>
        <BigIcon><G w={57} h={52} sw={1.8}><path d="M1 1h53v41H1zM1 15h53M1 29h53M18 1v41M36 1v41" fill="#fff" /><path d="M23 30h8l3-4h8l3 4h11v21H23z" fill="#eff5fb" stroke="#7ba3cb" /><circle cx="40" cy="40" r="7" stroke="#7ba3cb" /></G><Chev /></BigIcon>
        {"Data from\nPicture"}
      </Big>
    </Group>
    <Group $w={411}>
      <Big $w={118} $pad={12} $off>
        <BigIcon><G w={52} h={56} sw={1.8}><path d="M1 48V1h26M7 52V7h22l12 13v10M7 52h14M29 7v13h12" /><path d="M24 43a13 13 0 0124-7M50 42a13 13 0 01-24 7M48 29v8h-8M26 56v-8h8" stroke="#a3cfa7" /></G><Chev /></BigIcon>
        {"Refresh\nAll"}
      </Big>
      <Stack>
        <Small><G w={31} h={28} sw={1.8}><path d="M1 22V1h28v16M1 22h12M1 27h8" /><g stroke="#7ba3cb"><circle cx="15" cy="14" r="3.5" /><circle cx="15" cy="24" r="3.5" /><circle cx="26" cy="24" r="3.5" /><path d="M15 18v2M18 16l6 5" /></g></G>Queries &amp; Connections</Small>
        <Small $off><G w={31} h={28} sw={1.8}><path d="M5 0h22v28H5zM17 9h5M17 20h5" /><circle cx="12" cy="9" r="2" /><circle cx="12" cy="20" r="2" /></G>Properties</Small>
        <Small $off><G w={31} h={28} sw={1.8}><path d="M18 0H5v28h5M18 0l9 9v8M18 0v9h9" /><path d="M15 22a4 4 0 118 0v3a4 4 0 11-8 0z" stroke="#c9d3e2" /></G>Edit Links</Small>
      </Stack>
    </Group>
    <Group $w={525}>
      <Gallery>
        <G w={52} h={46}><path d="M2 14L26 1l24 13v4H2zM7 18v20M15 18v20M23 18v20M31 18v20M38 18v20M45 18v20M4 39h44M1 45h50" /></G>
        <G w={58} h={46}><path d="M2 6h52v34H2zM8 18v-6h6M48 18v-6h-6M8 28v6h6" /><ellipse cx="28" cy="23" rx="9" ry="12" /><path d="M34 28c0-5 22-5 22 0v16c0 4-22 4-22 0zM34 28c0 5 22 5 22 0M34 36c0 5 22 5 22 0" fill="#fff" /></G>
        <G w={54} h={46}><path d="M1 12L18 2l18 10L53 2v32L36 44 18 34 1 44zM18 2v32M36 12v32" /></G>
      </Gallery>
    </Group>
    <Group $w={384}>
      <SortRow>
        <G w={32} h={34}><path d="M25 2v28M19 24l6 7 6-7" /><T x={8} y={13} s={16} c="#6f9bc9">A</T><T x={8} y={32} s={16} c="#666">Z</T></G>
        <G w={54} h={56}><path d="M1 1h52v54H1z" fill="#fff" /><path d="M1 1h52v8H1z" fill="#cfcfd1" /><path d="M27 9v46" /><T x={14} y={27} s={19} c="#666">Z</T><T x={14} y={47} s={19} c="#6f9bc9">A</T><T x={40} y={27} s={19} c="#6f9bc9">A</T><T x={40} y={47} s={19} c="#666">Z</T></G>
        <G w={54} h={56}><path d="M1 1h52v9L33 32v22H21V32L1 10z" fill="#fff" /></G>
        <Stack>
          <Small $off><G w={31} h={30} sw={1.8}><path d="M1 1h28L19 13M1 1l10 12v11l4 3" /><path d="M18 19l10 11M28 19L18 30" stroke="#e3b9bb" /></G>Clear</Small>
          <Small $off aria-label="Reapply"><G w={31} h={28} sw={1.8}><path d="M1 4h28L18 16v10" /></G></Small>
        </Stack>
      </SortRow>
    </Group>
    <Group $w={250}>
      <DataTools>
        <Pressed aria-label="Text to Columns"><G w={48} h={56} color="#3f3f41"><path d="M1 8h20M1 16h20M1 24h20" /><path d="M29 0h17v56H29zM29 18h17M29 37h17" fill="#fff" /><path d="M34 9h7M34 27h7M34 46h7" stroke="#7ba3cb" /></G></Pressed>
        <G w={32} h={30}><path d="M18 5h11v14H18z" fill="#8ab2dc" stroke="none" /><path d="M17 4h13v25H2v-8h28M17 4v25M17 12h13" /><path d="M4 1h10l-4 8h6L5 22l2-9H1z" fill="#f0c496" stroke="none" /></G>
        <Row $gap={12}><G w={31} h={30}><path d="M10 4H1v8h9M10 19H1v8h9" /><path d="M14 8l4 4L29 0" stroke="#8ca78f" /><circle cx="21" cy="22" r="7" stroke="#d9828a" /><path d="M16 17l10 10" stroke="#d9828a" /></G><Chev /></Row>
      </DataTools>
    </Group>
    <Group $w={130}>
      <Big $w={128}>
        <BigIcon><G w={58} h={52} sw={1.8}><path d="M1 1h52v41H1z" fill="#fff" stroke="none" /><path d="M1 1h18v14H1zM1 29h18v13H1z" fill="#b3cfec" stroke="none" /><path d="M53 25V1H1v41h38M1 15h52M1 29h35M19 1v41M36 1v41" /><path d="M38 26c0-9 16-9 17 0 0 7-8 7-8 15M47 49v1" stroke="#7ba3cb" strokeWidth="2.4" /></G><Chev /></BigIcon>
        {"What-if\nAnalysis"}
      </Big>
    </Group>
    <Group $w={245}>
      <Stack $pad={24}>
        <Small><GroupGlyph kind="g" />Group<Chev /></Small>
        <Small><GroupGlyph kind="u" />Ungroup<Chev /></Small>
        <Small><GroupGlyph kind="s" />Subtotal</Small>
      </Stack>
      <Indents><Outline plus /><Outline /></Indents>
    </Group>
    <LastGroup>
      <Small $gap={14}><G w={26} h={28} sw={1.8}><circle cx="13" cy="14" r="5" /><path d="M9 1h8l1 4 3 2 4-1v7l-2 1 2 2v6l-4 0-3 2-1 4H9l-1-4-3-2-4 0v-6l2-2-2-1V6l4 1 3-2z" /></G>Analysis Tools</Small>
    </LastGroup>
  </Ribbon>
);

const SheetTable = () => (
  <SheetArea>
    <Sheet>
      <thead>
        <tr>
          <HeadCell $w={43} aria-label="Select all"><G w={26} h={26} sw={0}><path d="M26 0v26H0z" fill="#dcdcde" /></G></HeadCell>
          {letters.map(l => <HeadCell key={l} scope="col" $on={l === "A"}>{l}</HeadCell>)}
        </tr>
      </thead>
      <tbody>
        <tr>
          <RowHead scope="row">1</RowHead>
          {letters.map((l, i) => <Cell key={l} $bold $clip={i === 3} $open={i === 4}>{titles[i]}</Cell>)}
        </tr>
        {rows.map(([key, text, spill], r) => (
          <tr key={r}>
            <RowHead scope="row" $on>{r + 2}</RowHead>
            <Cell $open $sel={r === 0 ? "first" : r === rows.length - 1 ? "last" : "mid"}>
              {text ? <Clip>{key}</Clip> : key}
              {r === rows.length - 1 && <FillHandle />}
            </Cell>
            {letters.slice(1).map((l, i) => <Cell key={l} $open={i + 1 < spill}>{i === 0 ? text : null}</Cell>)}
          </tr>
        ))}
        {[34, 35].map(n => (
          <tr key={n}><RowHead scope="row">{n}</RowHead>{letters.map(l => <Cell key={l} />)}</tr>
        ))}
      </tbody>
    </Sheet>
  </SheetArea>
);

const Wizard = () => (
  <Dialog role="dialog" aria-labelledby="wizard-title">
    <DialogTitle id="wizard-title">Convert Text to Columns Wizard - Step 1 of 3</DialogTitle>
    <DialogBody onSubmit={e => e.preventDefault()}>
      <Lead>The Text Wizard has determined that your data is Delimited.</Lead>
      <Para>If this is correct, choose Next, or choose the data type that best describes your data.</Para>
      <Choice><Radio type="radio" name="kind" defaultChecked /><span>Delimited</span><span>– Characters such as commas or tabs separate each field.</span></Choice>
      <Choice><Radio type="radio" name="kind" /><span>Fixed width</span><span>– Fields are aligned in columns with spaces between each field.</span></Choice>
      <PreviewLabel>Preview of selected data:</PreviewLabel>
      <Preview>
        <PreviewTitle>Preview of selected data:</PreviewTitle>
        <Lines>
          <LineTable><tbody>
            {preview.map((t, i) => <LineRow key={t} $h={i === 0 ? 23 : undefined}><LineNo scope="row">{i + 2}</LineNo><LineText>{t}</LineText></LineRow>)}
            <LineRow $h={9}><LineNo /><LineText /></LineRow>
          </tbody></LineTable>
        </Lines>
        <VThumb /><HThumb />
      </Preview>
      <Actions>
        <Action type="button">Cancel</Action><Action type="button" $kind="off" disabled>&lt; Back</Action>
        <Action $kind="primary">Next &gt;</Action><Action type="button">Finish</Action>
      </Actions>
    </DialogBody>
    <Cursor><svg width="20" height="32" viewBox="0 0 20 32"><path d="M1 1v24l6-5 4 10 4-2-4-9h8z" fill="#111" stroke="#fff" strokeWidth="2" /></svg></Cursor>
  </Dialog>
);

export default function App() {
  return (
    <>
      <Global />
      <Page>
        <Stage>
          <MenuBar>
            <Menus>
              <G w={26} h={30} sw={0}><path d="M18 0c0 4-3 7-6 7 0-4 3-6 6-7zM13 9c2 0 4-2 7-1 2 0 4 1 5 3-5 3-4 10 1 12-1 3-4 7-7 7-2 0-3-1-5-1s-3 1-5 1C5 30 0 23 0 17c0-6 4-9 8-9 2 0 4 1 5 1z" fill="#e2e9ee" /></G>
              <MenuItem $bold>Excel</MenuItem>
              {["File", "Edit", "View", "Insert", "Format", "Tools", "Data", "Window"].map(m => <MenuItem key={m}>{m}</MenuItem>)}
            </Menus>
            <Status>
              <G w={20} h={30} sw={0}><rect width="20" height="28" rx="7" fill="#75797f" /><T x={10} y={21} s={18} c="#b9bcc0" b>R</T></G>
              <G w={33} h={30} sw={2.5}><path d="M7 11V2h12l9 9M2 16c3-4 9-4 12 0M12 24c-3 4-7 4-10 0v4h9" /><circle cx="24" cy="22" r="8" fill="#8496a2" stroke="none" /></G>
              <G w={41} h={30} sw={0}><circle cx="14" cy="15" r="14" fill="#d5dfdc" /><path d="M1 14C4 6 11 1 19 2c2 2-3 5-5 7-3 3-8 4-13 5z" fill="#7ea66a" /><circle cx="31" cy="19" r="10" fill="#d8b48a" stroke="#eadcc0" strokeWidth="2" /><path d="M27 18h8v7h-8z" fill="#fff" /><path d="M28.5 18v-2a2.5 2.5 0 015 0v2" stroke="#fff" strokeWidth="1.5" /></G>
              <G w={26} h={28} sw={5} color="#d6dee4"><path d="M10 4L3 8v11M16 4l7 4v11M6 22l7 4 7-4" strokeLinecap="butt" /></G>
              <G w={28} h={30} sw={0}><path d="M0 0l14 7v6L6 9v12l8 4v5L0 23z" fill="#d3342d" /><path d="M28 0L14 7v6l8-4v12l-8 4v5l14-7z" fill="#7e2a22" /></G>
              <G w={30} h={24}><rect x="1" y="1" width="28" height="22" rx="2" /><path d="M1 6h28" strokeWidth="4" /><path d="M5 12h7M5 16h7" /><T x={21} y={20} s={11} c="#e2e9ee" b>K</T></G>
              <G w={50} h={24}><rect x="1" y="1" width="42" height="22" rx="6" stroke="#9aabb6" /><rect x="4" y="4" width="36" height="16" rx="3" fill="#e2e9ee" stroke="none" /><path d="M47 9v6" stroke="#9aabb6" strokeWidth="3" /><path d="M25 2l-9 11h6l-2 10 10-12h-7z" fill="#e2e9ee" stroke="#2a4453" /></G>
              <G w={31} h={24} sw={4}><path d="M2 8c8-8 19-8 27 0M8 14c5-4 10-4 15 0" strokeLinecap="butt" /><path d="M11 18l4.5 5 4.5-5c-3-2-6-2-9 0z" fill="#e2e9ee" stroke="none" /></G>
              <Magnifier s={26} sw={2.6} />
              <G w={42} h={26}><rect x="1" y="1" width="25" height="10" rx="5" /><circle cx="7" cy="6" r="5" fill="#e2e9ee" stroke="none" /><rect x="1" y="14" width="25" height="11" rx="5" fill="#e2e9ee" /><circle cx="38" cy="13" r="4.500" fill="#c58a4a" stroke="none" /></G>
              <Clock><span>Wed 9 Nov</span><span>7:31 PM</span></Clock>
            </Status>
          </MenuBar>

          <Excel>
            <TitleBar>
              <Row>
                <Row $gap={16}><Light $dot aria-label="Close" /><Light aria-label="Minimize" /><Light aria-label="Full screen" /></Row>
                <AutoSave>AutoSave<Toggle><input type="checkbox" />OFF</Toggle></AutoSave>
                <Tool $w={30} aria-label="Home"><G w={28} h={29} sw={2.2}><path d="M1 13L14 1l13 12v15h-8V18H9v10H1z" /></G></Tool>
                <Tool $w={30} aria-label="Save"><G w={28} h={28} sw={2.2}><path d="M1 1h22l4 4v22H1zM7 1v9h13V1M6 27V16h16v11" /></G></Tool>
                <Tool $w={30} aria-label="Save as"><G w={30} h={28} sw={2.2}><path d="M12 27H1V1h20l4 4v6M6 1v9h13V1M6 27V16h12" /><path d="M28 14L18 27l-5 1 2-5 10-12z" fill="#eef5ef" /></G></Tool>
                <Tool $w={30} $after={12} aria-label="Undo"><G w={28} h={30} sw={2.2}><path d="M2 1v11h11M2 12C10 2 20 0 24 5c5 6 0 12-6 24" /></G></Tool>
                <Tool $w={14} $after={15} aria-label="Undo history"><Chev /></Tool>
                <Tool $w={32} aria-label="Redo"><G w={32} h={30} sw={2.2}><path d="M29 1v9h-9M28 10a14 14 0 102 6" /></G></Tool>
                <Tool $w={26} aria-label="More"><G w={26} h={6} sw={0}><g fill="#eef5ef"><circle cx="3" cy="3" r="3" /><circle cx="13" cy="3" r="3" /><circle cx="23" cy="3" r="3" /></g></G></Tool>
              </Row>
              <BookTitle>Book2</BookTitle>
              <Row $gap={36} $end>
                <Magnifier /><G w={31} h={30}><circle cx="9" cy="12" r="5" /><path d="M1 20h17v3c0 8-17 8-17 0zM16 1h14v10h-7l-4 4v-4h-3z" /></G>
              </Row>
            </TitleBar>

            <TabRow>
              <Tabs>
                {["Home", "Insert", "Draw", "Page Layout", "Formulas", "Data", "Review", "View"].map(t => <Tab key={t} $on={t === "Data"}>{t}</Tab>)}
                <TellMe><G w={22} h={28}><path d="M7 20c0-4-6-6-6-11a10 9 0 0120 0c0 5-6 7-6 11zM7 24h8M9 28h4" /></G>Tell me</TellMe>
              </Tabs>
              <ChipRow>
                <Chip><G w={24} h={24} sw={1.8}><path d="M7 6H1v17h19v-8M5 17c1-7 5-10 11-10V2l7 7-7 7v-5c-5 0-8 1-11 6z" /></G>Share</Chip>
                <Chip><G w={24} h={24} sw={1.8}><path d="M1 2h22v15H11l-5 6v-6H1z" /></G>Comments</Chip>
              </ChipRow>
            </TabRow>
            <RibbonBar />

            <Message>
              <span><Strong>Open recovered workbooks?</Strong>Your recent changes were saved. Do you want to continue</span>
              <Row $gap={16}><MsgButton>Yes</MsgButton><MsgButton>No</MsgButton></Row>
            </Message>

            <Formula>
              <NameBox><input aria-label="Name box" defaultValue="A2" /><G w={12} h={32} sw={0}><path d="M6 0l6 10H0zM6 32l6-10H0z" fill="#808082" /></G></NameBox>
              <FormulaTools>
                <G w={22} h={22} sw={3}><path d="M2 2l18 18M20 2L2 20" /></G>
                <G w={26} h={22} sw={3}><path d="M2 12l8 8L24 2" /></G>
                <Fx>fx</Fx>
              </FormulaTools>
              <FormulaInput aria-label="Formula" defaultValue="OITBD-16154{ add bpftool packages in farm_install_std_packages cookbook" />
              <Row><G w={12} h={11} sw={0}><path d="M0 0h12L6 11z" fill="#6a6a6c" /></G></Row>
            </Formula>

            <SheetTable />

            <SheetTabs>
              <Arrows><G w={14} h={20} sw={0}><path d="M14 0v20L0 10z" fill="#b2b2b4" /></G><G w={14} h={20} sw={0}><path d="M0 0v20l14-10z" fill="#b2b2b4" /></G></Arrows>
              <SheetTab>Sheet1</SheetTab>
              <AddTab aria-label="Add sheet"><G w={20} h={20} sw={3}><path d="M10 1v18M1 10h18" /></G></AddTab>
            </SheetTabs>
            <StatusBar>
              <Row $gap={36}><span>Ready</span><Row $gap={6}><G w={30} h={28}><circle cx="14" cy="4" r="3" /><path d="M2 5c2 5 6 3 8 6l-3 16 4 0 2-9M26 5c-2 5-6 3-7 6l1 6M16 22l5 5 8-10" /></G>Accessibility: Good to go</Row></Row>
              <Row>
                <CountText>Count: 32</CountText>
                <ViewButton $on aria-label="Normal"><GridGlyph /></ViewButton>
                <ViewButton aria-label="Page layout"><G w={27} h={25}><path d="M1 1h25v23H1zM5 5h17v16H5zM8 9h11M8 13h11M8 17h11" /></G></ViewButton>
                <ViewButton aria-label="Page break"><G w={27} h={25}><path d="M1 1h25v23H1zM9 1v13h17M17 1v13M1 14h8" /></G></ViewButton>
                <ZoomSet>
                  <ZoomButton aria-label="Zoom out"><G w={16} h={16} sw={3}><path d="M1 8h14" /></G></ZoomButton>
                  <Zoom type="range" aria-label="Zoom" defaultValue={50} />
                  <ZoomButton aria-label="Zoom in"><G w={16} h={16} sw={3}><path d="M1 8h14M8 1v14" /></G></ZoomButton>
                </ZoomSet>
                <Percent>100%</Percent>
              </Row>
            </StatusBar>
            <Wizard />
          </Excel>

          <DockArea>
            <Dock>
              {dock.map(d => (
                <React.Fragment key={d.name}>
                  {(d.name === "Acrobat" || d.name === "Document") && <Divider />}
                  <DockItem aria-label={d.name}>
                    <G w={45} h={45}>{art[d.name]}</G>
                    {d.run && <Running />}
                    {d.badge && <Badge>{d.badge}</Badge>}
                  </DockItem>
                </React.Fragment>
              ))}
            </Dock>
          </DockArea>
        </Stage>

        <Controls>
          <ControlGroup>
            <Control><ControlIcon><G w={28} h={44} sw={3}><rect x="6" y="0" width="16" height="30" rx="8" fill="#a6a6a6" stroke="none" /><path d="M1 21c0 17 26 17 26 0M14 34v8M7 43h14" /></G></ControlIcon>Mute</Control>
            <Caret $before={26} aria-label="Audio options"><Chev up /></Caret>
            <Control $before={41}><ControlIcon><G w={50} h={44}><rect x="0" y="8" width="34" height="28" rx="6" fill="#a6a6a6" stroke="none" /><path d="M37 17l12-7v24l-12-7z" fill="#a6a6a6" stroke="none" /><path d="M2 45L48 1" stroke="#1b1b1b" strokeWidth="8" /><path d="M2 44L47 0" stroke="#ef6a62" strokeWidth="3" /></G></ControlIcon>Start Video</Control>
            <Caret $before={-9} aria-label="Video options"><Chev up /></Caret>
          </ControlGroup>
          <ControlGroup $mid>
            <Control><ControlIcon><G w={48} h={36} sw={0}><g fill="#a6a6a6"><circle cx="15" cy="8" r="8" /><circle cx="35" cy="11" r="7" /><path d="M0 36c-1-10 5-16 15-16s15 6 14 16zM31 36c1-5 0-9-2-12 11-4 20 0 19 12z" /></g></G></ControlIcon>Participants<Count>2</Count></Control>
            <Caret $before={2} aria-label="Participant options"><Chev up /></Caret>
            <Control $before={78}><ControlIcon><G w={40} h={36} sw={0}><path d="M8 0h24a8 8 0 018 8v12a8 8 0 01-8 8H17l-9 8v-8a8 8 0 01-8-8V8a8 8 0 018-8z" fill="#a6a6a6" /></G></ControlIcon>Chat</Control>
            <Caret $before={28} aria-label="Chat options"><Chev up /></Caret>
            <Control $before={32} $green><ControlIcon><G w={48} h={36} sw={3.5} color="#1b1b1b"><rect width="48" height="36" rx="6" fill="#69d66c" stroke="none" /><path d="M24 27V10M17 16l7-7 7 7" /></G></ControlIcon>Share Screen</Control>
            <Control $before={60}><ControlIcon><G w={40} h={40} sw={2.5}><circle cx="20" cy="20" r="18.5" /><circle cx="20" cy="20" r="14" fill="#a6a6a6" stroke="none" /></G></ControlIcon>Record</Control>
            <Control $before={61}><ControlIcon><G w={48} h={36} sw={0}><rect width="48" height="36" rx="6" fill="#a6a6a6" /><T x={24} y={25} s={20} c="#1b1b1b" b>CC</T></G></ControlIcon>Show Captions</Control>
            <Caret $before={-19} aria-label="Caption options"><Chev up /></Caret>
            <Control $before={41}><ControlIcon><G w={42} h={42} sw={2.6}><circle cx="19" cy="24" r="18" fill="#a6a6a6" stroke="none" /><path d="M35 0v16M27 8h16" stroke="#1b1b1b" strokeWidth="8" /><path d="M35 2v12M29 8h12" /><circle cx="13" cy="20" r="2.5" fill="#1b1b1b" stroke="none" /><circle cx="25" cy="20" r="2.5" fill="#1b1b1b" stroke="none" /><path d="M11 28c4 6 12 6 16 0" stroke="#1b1b1b" /></G></ControlIcon>Reactions</Control>
            <Caret $before={-10} aria-label="Reaction options"><Chev up /></Caret>
            <Control $before={33}><ControlIcon><G w={42} h={34} sw={3}><path d="M9 30H6a5 5 0 01-5-5V6a5 5 0 015-5h29a5 5 0 015 5v16" /><path d="M15 30l6-4h20v8H21z" fill="#a6a6a6" stroke="none" /></G></ControlIcon>Whiteboards</Control>
          </ControlGroup>
          <Leave>Leave</Leave>
        </Controls>

        <Shield><G w={26} h={28} sw={3} color="#0a0d0b"><path d="M13 0l13 5v9c0 7-6 12-13 14C6 26 0 21 0 14V5z" fill="#69d66c" stroke="none" /><path d="M7 14l5 5 8-9" /></G></Shield>
        <ShareBanner>
          <Viewing>You are viewing V D V Srikanth Gr...'s screen</Viewing>
          <ViewOptions>View Options<Chev /></ViewOptions>
        </ShareBanner>
        <ViewPill><G w={22} h={22} sw={0}><g fill="#f2f2f2"><rect width="6" height="6" rx="1" /><rect x="8" width="6" height="6" rx="1" /><rect x="16" width="6" height="6" rx="1" /><rect y="8" width="22" height="14" rx="2" /></g></G>View</ViewPill>
        <RecordDot />
      </Page>
    </>
  );
}
